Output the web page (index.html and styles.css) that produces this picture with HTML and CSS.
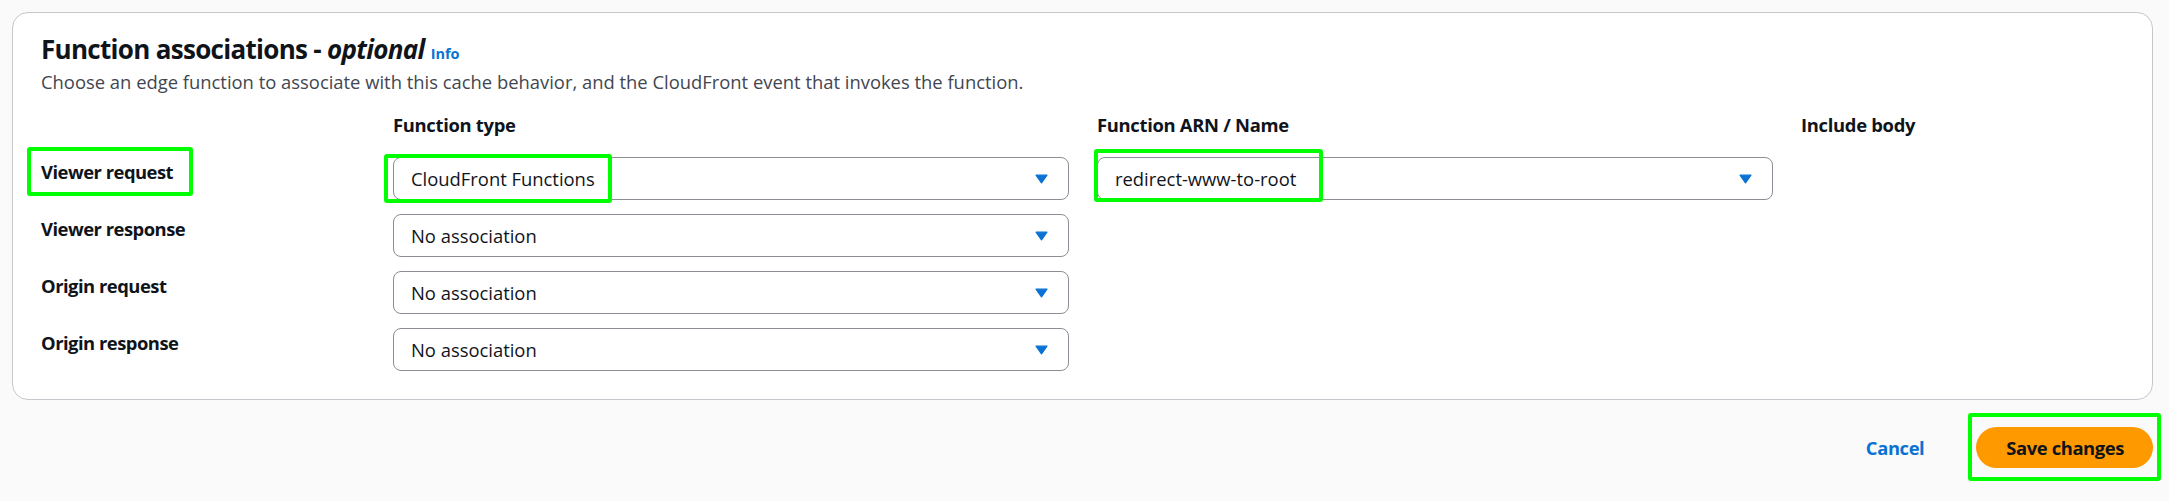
FILE: index.html
```html
<!DOCTYPE html>
<html lang="en">
<head>
<meta charset="utf-8">
<title>Function associations</title>
<link rel="stylesheet" href="styles.css">
</head>
<body>
<div class="page">
  <section class="card">
    <h2 class="title">Function associations - <i>optional</i> <a class="info" href="#">Info</a></h2>
    <p class="desc">Choose an edge function to associate with this cache behavior, and the CloudFront event that invokes the function.</p>
    <div class="grid">
      <div class="colhead"></div>
      <div class="colhead">Function type</div>
      <div class="colhead">Function ARN / Name</div>
      <div class="colhead">Include body</div>

      <div class="label"><span class="mark mark-label">Viewer request</span></div>
      <div class="select sel-type-hl">
        <span class="value">CloudFront Functions</span>
        <svg class="caret" viewBox="0 0 12 9" aria-hidden="true"><polygon points="1,1 11,1 6,8"/></svg>
      </div>
      <div class="select sel-arn-hl">
        <span class="value">redirect-www-to-root</span>
        <svg class="caret" viewBox="0 0 12 9" aria-hidden="true"><polygon points="1,1 11,1 6,8"/></svg>
      </div>
      <div class="empty"></div>

      <div class="label">Viewer response</div>
      <div class="select">
        <span class="value">No association</span>
        <svg class="caret" viewBox="0 0 12 9" aria-hidden="true"><polygon points="1,1 11,1 6,8"/></svg>
      </div>
      <div class="empty"></div>
      <div class="empty"></div>

      <div class="label">Origin request</div>
      <div class="select">
        <span class="value">No association</span>
        <svg class="caret" viewBox="0 0 12 9" aria-hidden="true"><polygon points="1,1 11,1 6,8"/></svg>
      </div>
      <div class="empty"></div>
      <div class="empty"></div>

      <div class="label">Origin response</div>
      <div class="select">
        <span class="value">No association</span>
        <svg class="caret" viewBox="0 0 12 9" aria-hidden="true"><polygon points="1,1 11,1 6,8"/></svg>
      </div>
      <div class="empty"></div>
      <div class="empty"></div>
    </div>
  </section>
  <div class="actions">
    <a class="cancel" href="#">Cancel</a>
    <span class="mark mark-save"><button class="save" type="button">Save changes</button></span>
  </div>
</div>
</body>
</html>
```
FILE: styles.css
```css
*, *::before, *::after { box-sizing: border-box; }
html, body { margin: 0; padding: 0; background: #fafafa; }
body {
  min-height: 100vh;
  font-family: "Open Sans", "Noto Sans", sans-serif;
  font-size: 18.4px;
  line-height: 26px;
  color: #0f141a;
}
.page {
  padding: 12px 16px 32px 12px;
}
.card {
  background: #ffffff;
  border: 1px solid #c6c6cd;
  border-radius: 16px;
  padding: 20px 28px 28px 28px;
}
.title {
  margin: 0;
  font-size: 26px;
  line-height: 32px;
  font-weight: 700;
  letter-spacing: -0.7px;
  color: #0f141a;
}
.title i { font-style: italic; }
.info {
  font-size: 14.5px;
  line-height: 1;
  font-weight: 700;
  letter-spacing: 0;
  color: #0972d3;
  text-decoration: none;
}
.desc {
  margin: 4px 0 0 0;
  color: #424650;
}
.grid {
  display: grid;
  grid-template-columns: 324px 676px 676px 1fr;
  column-gap: 28px;
  row-gap: 14px;
  margin-top: 17px;
}
.colhead {
  font-weight: 700;
  letter-spacing: -0.3px;
  margin-bottom: 5px;
}
.label {
  font-weight: 700;
  letter-spacing: -0.5px;
  padding-top: 2px;
}
.select {
  position: relative;
  height: 43px;
  border: 1px solid #8c8c94;
  border-radius: 8px;
  background: #fff;
  display: flex;
  align-items: center;
  justify-content: space-between;
  padding: 0 20px 0 17px;
}
.caret {
  width: 13px;
  height: 10px;
  fill: #0972d3;
  stroke: #0972d3;
  stroke-width: 1.2;
  stroke-linejoin: round;
}
.mark {
  position: relative;
  display: inline-block;
}
.mark-label::after,
.sel-type-hl::after,
.sel-arn-hl::after,
.mark-save::after {
  content: "";
  position: absolute;
  border: 4px solid #00ff00;
  border-radius: 3px;
  pointer-events: none;
}
.mark-label::after {
  left: -14px;
  right: -20px;
  top: -12px;
  bottom: -11px;
}
.sel-type-hl::after {
  left: -10px;
  top: -4px;
  bottom: -4px;
  width: 228px;
}
.sel-arn-hl::after {
  left: -4px;
  top: -9px;
  bottom: -3px;
  width: 229px;
}
.actions {
  display: flex;
  justify-content: flex-end;
  align-items: center;
  gap: 52px;
  margin-top: 27px;
}
.cancel {
  font-weight: 700;
  letter-spacing: -0.4px;
  color: #0972d3;
  text-decoration: none;
}
.mark-save {
  display: block;
  height: 41px;
}
.save {
  display: block;
  height: 41px;
  border: none;
  border-radius: 21px;
  background: #ff9900;
  color: #0f141a;
  font-family: inherit;
  font-size: 18.4px;
  font-weight: 700;
  letter-spacing: -0.4px;
  line-height: 26px;
  padding: 0 29px 0 30px;
  cursor: pointer;
}
.mark-save::after {
  left: -8px;
  right: -8px;
  top: -14px;
  bottom: -13px;
}
```
